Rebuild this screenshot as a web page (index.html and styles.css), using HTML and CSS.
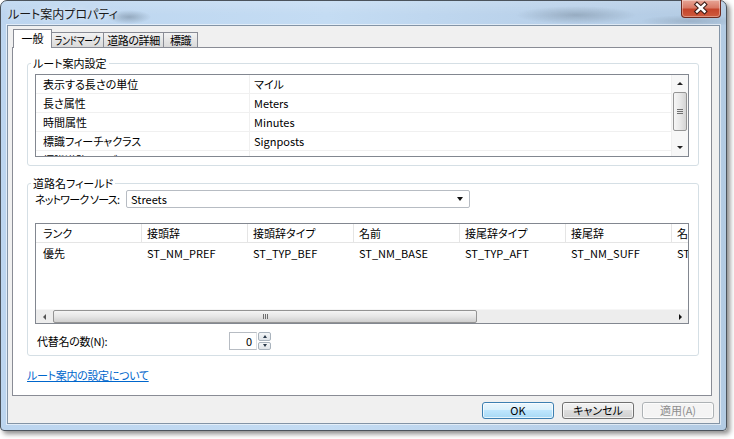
FILE: index.html
```html
<!DOCTYPE html>
<html lang="ja"><head><meta charset="utf-8"><title>ルート案内プロパティ</title>
<link rel="stylesheet" href="styles.css"></head><body>
<div class="window">
    <div class="titlebar">
        <span class="title">ルート案内プロパティ</span>
        <div class="close">
            <svg width="40" height="17" viewBox="0 0 40 17">
                <path d="M16 4.5 L23.5 11.5 M23.5 4.5 L16 11.5" stroke="#40201a" stroke-width="4.6" stroke-linecap="square" fill="none"></path>
                <path d="M16 4.5 L23.5 11.5 M23.5 4.5 L16 11.5" stroke="#fff" stroke-width="2.4" stroke-linecap="square" fill="none"></path>
            </svg>
        </div>
    </div>

    <div class="client">
        <div class="tabs">
            <div class="tab active t1">一般</div>
            <div class="tab t2"><span class="squeeze">ランドマーク</span></div>
            <div class="tab t3">道路の詳細</div>
            <div class="tab t4">標識</div>
        </div>

        <div class="panel">
            <fieldset class="group">
                <legend>ルート案内設定</legend>
                <div class="list list-settings">
                    <div class="rows">
                        <div class="row"><span class="key">表示する長さの単位</span><span class="val">マイル</span></div>
                        <div class="row"><span class="key">長さ属性</span><span class="val">Meters</span></div>
                        <div class="row"><span class="key">時間属性</span><span class="val">Minutes</span></div>
                        <div class="row"><span class="key">標識フィーチャクラス</span><span class="val">Signposts</span></div>
                        <div class="row"><span class="key">標識道路テーブル</span><span class="val">SignpostsStreets</span></div>
                    </div>
                    <div class="vscroll">
                        <div class="arrow up"></div>
                        <div class="vthumb"><span></span><span></span><span></span></div>
                        <div class="vtrack"></div>
                        <div class="arrow down"></div>
                    </div>
                </div>
            </fieldset>

            <fieldset class="group group-streets">
                <legend>道路名フィールド</legend>
                <div class="netrow">
                    <span class="netlabel">ネットワーク ソース:</span>
                    <div class="combo">
                        <span>Streets</span>
                        <span class="combo-arrow"></span>
                    </div>
                </div>

                <div class="list list-fields">
                    <div class="grid">
                        <div class="grow head">
                            <span>ランク</span><span>接頭辞</span><span>接頭辞タイプ</span><span>名前</span><span>接尾辞タイプ</span><span>接尾辞</span><span>名前</span>
                        </div>
                        <div class="grow">
                            <span>優先</span><span>ST_NM_PREF</span><span>ST_TYP_BEF</span><span>ST_NM_BASE</span><span>ST_TYP_AFT</span><span>ST_NM_SUFF</span><span>ST_NAME</span>
                        </div>
                    </div>
                    <div class="hscroll">
                        <div class="harrow left"></div>
                        <div class="hthumb"><span></span><span></span><span></span></div>
                        <div class="htrack"></div>
                        <div class="harrow right"></div>
                    </div>
                </div>

                <div class="altrow">
                    <span class="altlabel">代替名の数(N):</span>
                    <div class="spin-input">0</div>
                    <div class="spin-buttons">
                        <div class="spin-btn"><span class="tri-up"></span></div>
                        <div class="spin-btn"><span class="tri-down"></span></div>
                    </div>
                </div>
            </fieldset>

            <a class="help" href="#">ルート案内の設定について</a>
        </div>

        <div class="buttons">
            <button class="btn default">OK</button>
            <button class="btn">キャンセル</button>
            <button class="btn" disabled>適用(A)</button>
        </div>
    </div>
</div>
</body></html>
```

FILE: styles.css
```css
* {
    box-sizing: border-box;
}

body {
    margin: 0;
    width: 734px;
    height: 439px;
    overflow: hidden;
    background: #fff;
    font-family: "Noto Sans CJK JP", "Noto Sans", sans-serif;
    font-size: 11px;
    font-feature-settings: "palt";
    color: #000;
}

/* window frame */

.window {
    position: relative;
    width: 727px;
    height: 431px;
    padding: 0 6px 6px 6px;
    display: flex;
    flex-direction: column;
    border: 1px solid #4b535c;
    border-radius: 7px 7px 4px 4px;
    background: linear-gradient(to right, #bcd5ef 0%, #c4dcf3 45%, #b9d1ea 75%, #b3cbe3 100%);
    box-shadow: 3px 3px 5px rgba(0, 0, 0, 0.45);
}

.titlebar {
    height: 24px;
    display: flex;
    align-items: center;
    padding-left: 7px;
    margin: 0 -6px;
    border-radius: 6px 6px 0 0;
    background:
        radial-gradient(ellipse 22px 7px at 128px 16px, rgba(70, 85, 100, 0.35), transparent),
        radial-gradient(ellipse 60px 9px at 575px 14px, rgba(90, 105, 120, 0.35), transparent),
        radial-gradient(ellipse 50px 6px at 690px 20px, rgba(90, 105, 120, 0.25), transparent),
        linear-gradient(to bottom, rgba(255, 255, 255, 0.15), rgba(255, 255, 255, 0) 60%);
}

.title {
    font-size: 12px;
    color: #1a1a1a;
    text-shadow: 0 0 6px rgba(255, 255, 255, 0.9);
}

.close {
    position: absolute;
    top: -1px;
    right: 5px;
    width: 40px;
    height: 18px;
    border: 1px solid #6e2a20;
    border-top: none;
    border-radius: 0 0 4px 4px;
    background: linear-gradient(to bottom, #e8a697 0%, #d97a66 45%, #c5452c 55%, #cf5b3e 100%);
    box-shadow: inset 0 0 0 1px rgba(255, 255, 255, 0.35);
}

.close svg {
    display: block;
    margin-left: -1px;
}

.client {
    flex: 1;
    display: flex;
    flex-direction: column;
    padding: 3px 5px 0 4px;
    border: 1px solid #8394a6;
    background: #f0f0f0;
    box-shadow: 0 0 0 1px rgba(255, 255, 255, 0.55);
}

/* tabs */

.tabs {
    display: flex;
    align-items: flex-end;
    height: 18px;
    padding-left: 1px;
}

.tab {
    height: 15px;
    display: flex;
    align-items: center;
    justify-content: center;
    border: 1px solid #898c95;
    border-left: none;
    border-bottom: none;
    background: linear-gradient(to bottom, #f3f3f3, #e6e6e6 50%, #dadada);
    white-space: nowrap;
    letter-spacing: -0.4px;
}

.tab.active {
    position: relative;
    z-index: 1;
    height: 19px;
    margin-bottom: -1px;
    padding-bottom: 2px;
    border-left: 1px solid #898c95;
    background: #fff;
    letter-spacing: 0;
}

.squeeze {
    display: inline-block;
    transform: scaleX(0.8);
    letter-spacing: -0.2px;
}

.t1 { width: 39px; }
.t2 { width: 52px; }
.t3 { width: 60px; }
.t4 { width: 34px; }

.panel {
    width: 700px;
    height: 349px;
    padding: 8px 12px 0 14px;
    border: 1px solid #898c95;
    background: #fff;
}

/* group boxes */

.group {
    min-width: 0;
    margin: 0;
    padding: 0 9px 8px 7px;
    border: 1px solid #d5dfe5;
    border-radius: 3px;
}

.group legend {
    height: 14px;
    line-height: 14px;
    margin-left: -4px;
    padding: 0 2px;
}

.group-streets {
    margin-top: 10px;
    padding-bottom: 5px;
}

/* list views */

.list {
    border: 1px solid #828790;
    background: #fff;
}

.list-settings {
    margin-top: 4px;
    height: 83px;
    display: flex;
}

.rows {
    flex: 1;
    overflow: hidden;
}

.row {
    display: flex;
    height: 19px;
    align-items: center;
    border-bottom: 1px solid #f0f0f0;
    white-space: nowrap;
}

.key {
    width: 214px;
    height: 100%;
    padding-left: 7px;
    display: flex;
    align-items: center;
    border-right: 1px solid #f0f0f0;
}

.val {
    padding-left: 4px;
}

.vscroll {
    width: 17px;
    display: flex;
    flex-direction: column;
    background: #f7f7f7;
    border-left: 1px solid #efefef;
}

.arrow {
    height: 17px;
    position: relative;
}

.arrow::after {
    content: "";
    position: absolute;
    left: 5px;
    width: 0;
    height: 0;
    border-left: 3px solid transparent;
    border-right: 3px solid transparent;
}

.arrow.up::after {
    top: 7px;
    border-bottom: 3px solid #222;
}

.arrow.down::after {
    top: 7px;
    border-top: 3px solid #222;
}

.vthumb {
    height: 39px;
    margin-left: 1px;
    width: 14px;
    border: 1px solid #959595;
    border-radius: 2px;
    background: linear-gradient(to right, #f6f6f6, #e8e8e8 50%, #d4d4d4);
    display: flex;
    flex-direction: column;
    align-items: center;
    justify-content: center;
    gap: 1px;
}

.vthumb span {
    width: 6px;
    height: 1px;
    background: #6f6f6f;
}

.vtrack {
    flex: 1;
}

/* street name fields */

.netrow {
    display: flex;
    align-items: center;
    height: 18px;
}

.netlabel {
    width: 91px;
    letter-spacing: -0.8px;
    white-space: nowrap;
}

.combo {
    width: 344px;
    height: 18px;
    display: flex;
    align-items: center;
    justify-content: space-between;
    padding: 0 6px 0 4px;
    border: 1px solid #b7bcc3;
    border-radius: 2px;
    background: #fff;
}

.combo-arrow {
    width: 0;
    height: 0;
    border-left: 3.5px solid transparent;
    border-right: 3.5px solid transparent;
    border-top: 4px solid #111;
}

.list-fields {
    margin-top: 15px;
    height: 101px;
    display: flex;
    flex-direction: column;
}

.grid {
    flex: 1;
    overflow: hidden;
}

.grow {
    display: flex;
    height: 19px;
    align-items: center;
    white-space: nowrap;
}

.grow.head {
    border-bottom: 1px solid #e5e5e5;
}

.grow span {
    flex: none;
    width: 106px;
    padding-left: 5px;
}

.grow.head span {
    height: 100%;
    display: flex;
    align-items: center;
    border-right: 1px solid #e5e5e5;
}

.grow span:first-child {
    padding-left: 7px;
}

.hscroll {
    height: 14px;
    display: flex;
    background: #ededed;
    border-top: 1px solid #f6f6f6;
}

.harrow {
    width: 17px;
    position: relative;
}

.harrow::after {
    content: "";
    position: absolute;
    top: 4px;
    width: 0;
    height: 0;
    border-top: 3px solid transparent;
    border-bottom: 3px solid transparent;
}

.harrow.left::after {
    left: 7px;
    border-right: 3px solid #555;
}

.harrow.right::after {
    left: 8px;
    border-left: 3px solid #111;
}

.hthumb {
    width: 424px;
    border: 1px solid #949494;
    border-radius: 2px;
    background: linear-gradient(to bottom, #f5f5f5, #e6e6e6 50%, #cfcfcf);
    display: flex;
    justify-content: center;
    align-items: center;
    gap: 1px;
}

.hthumb span {
    width: 1px;
    height: 5px;
    background: #6f6f6f;
}

.htrack {
    flex: 1;
}

.altrow {
    display: flex;
    align-items: center;
    height: 18px;
    margin-top: 8px;
}

.altlabel {
    width: 194px;
    padding-left: 2px;
    letter-spacing: -0.3px;
}

.spin-input {
    width: 28px;
    height: 18px;
    padding-right: 4px;
    text-align: right;
    line-height: 16px;
    border: 1px solid #b7bcc3;
    border-right-color: #dcdfe3;
    background: #fff;
}

.spin-buttons {
    width: 13px;
    height: 18px;
    margin-left: 1px;
    display: flex;
    flex-direction: column;
    gap: 1px;
}

.spin-btn {
    flex: 1;
    display: flex;
    align-items: center;
    justify-content: center;
    border: 1px solid #a9b3bd;
    border-radius: 2px;
    background: linear-gradient(to bottom, #f4f6f8, #dfe4e9);
}

.tri-up,
.tri-down {
    width: 0;
    height: 0;
    border-left: 2.5px solid transparent;
    border-right: 2.5px solid transparent;
}

.tri-up {
    border-bottom: 3px solid #2a3a4a;
}

.tri-down {
    border-top: 3px solid #2a3a4a;
}

.help {
    display: inline-block;
    margin-top: 12px;
    line-height: 14px;
    color: #0066cc;
    letter-spacing: -0.3px;
}

/* dialog buttons */

.buttons {
    display: flex;
    justify-content: flex-end;
    gap: 8px;
    margin-top: 6px;
}

.btn {
    width: 72px;
    height: 17px;
    padding: 0;
    font-family: inherit;
    font-size: 11px;
    font-feature-settings: "palt";
    line-height: 15px;
    color: #000;
    border: 1px solid #707070;
    border-radius: 3px;
    background: linear-gradient(to bottom, #f2f2f2 0%, #ebebeb 49%, #dddddd 50%, #cfcfcf 100%);
    box-shadow: inset 0 0 0 1px rgba(255, 255, 255, 0.7);
}

.btn.default {
    border-color: #3c7fb1;
    background: linear-gradient(to bottom, #eaf6fd 0%, #d9f0fc 49%, #bee6fd 50%, #a7d9f5 100%);
}

.btn:disabled {
    color: #8d8d8d;
    border-color: #adb2b5;
    background: #f4f4f4;
}
```
